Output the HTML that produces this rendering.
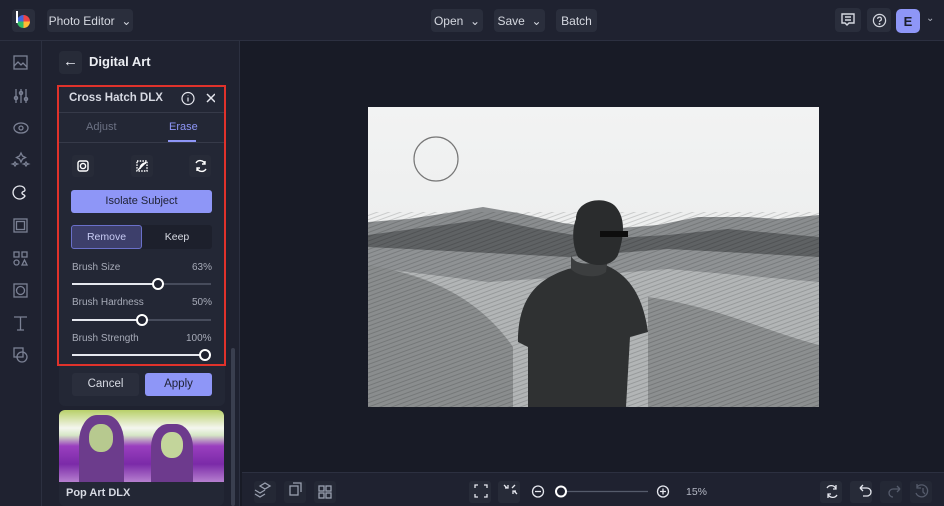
<!DOCTYPE html>
<html><head><style>
*{box-sizing:border-box;margin:0;padding:0}
body{width:944px;height:506px;overflow:hidden;background:#181b26;font-family:"Liberation Sans",sans-serif;color:#d7dae3;position:relative}
.abs{position:absolute}
.top{left:0;top:0;width:944px;height:41px;background:#1f2230;border-bottom:1px solid #2c3040}
.btn{position:absolute;background:#2a2e3c;border-radius:4px;font-size:12px;color:#d5d8e0;display:flex;align-items:center;justify-content:center}
.rail{left:0;top:41px;width:42px;height:465px;background:#1f2230;border-right:1px solid #2c3040}
.panel{left:42px;top:41px;width:198px;height:465px;background:#1f2230;border-right:1px solid #2c3040}
.bot{left:242px;top:472px;width:702px;height:34px;background:#1f2230;border-top:1px solid #2c3040}
.sq{position:absolute;width:22px;height:22px;background:#272b38;border-radius:3px}
.lbl{position:absolute;font-size:10px;color:#a7abb8}
.track{position:absolute;height:2px;background:#474c5c}
.fill{position:absolute;height:2px;background:#e5e7ee}
.knob{position:absolute;width:12px;height:12px;border-radius:50%;background:#1f2230;border:2px solid #fff}
</style></head><body>
<div class="abs top"></div>
<div class="abs" style="left:12px;top:9px;width:23px;height:23px;background:#2a2e3c;border-radius:4px"></div>
<div class="abs" style="left:17px;top:15px;width:13px;height:13px;border-radius:50%;background:conic-gradient(#e44 0 25%,#fb3 0 50%,#3b6 0 75%,#46d 0)"></div>
<div class="abs" style="left:16px;top:11px;width:2px;height:12px;background:#fff"></div>
<div class="btn" style="left:47px;top:9px;width:86px;height:23px">Photo Editor&nbsp;&nbsp;⌄</div>
<div class="btn" style="left:431px;top:9px;width:52px;height:23px">Open&nbsp;&nbsp;⌄</div>
<div class="btn" style="left:494px;top:9px;width:51px;height:23px">Save&nbsp;&nbsp;⌄</div>
<div class="btn" style="left:556px;top:9px;width:41px;height:23px">Batch</div>
<div class="btn" style="left:835px;top:8px;width:26px;height:24px">
<svg width="14" height="14" viewBox="0 0 14 14" fill="none" stroke="#d5d8e0" stroke-width="1.4"><path d="M1 1h12v9H8l-2 2-2-2H1z M4 4h6M4 7h6"/></svg></div>
<div class="btn" style="left:867px;top:8px;width:24px;height:24px"><svg width="15" height="15" viewBox="0 0 16 16" fill="none" stroke="#d5d8e0" stroke-width="1.3"><circle cx="8" cy="8" r="6.5"/><path d="M6 6.3a2 2 0 1 1 2.5 2c-.5.2-.5.6-.5 1.2"/><circle cx="8" cy="11.6" r=".4" fill="#d5d8e0"/></svg></div>
<div class="btn" style="left:896px;top:9px;width:24px;height:24px;background:#8e96f7;color:#1b1e2b;font-weight:bold;font-size:13px;border-radius:5px">E</div>
<div class="abs" style="left:926px;top:13px;font-size:10px;color:#b0b4c0">⌄</div>

<div class="abs rail"></div>
<svg class="abs" style="left:0;top:41px" width="42" height="330" fill="none" stroke="#7b8194" stroke-width="1.3">
<rect x="14" y="15" width="13" height="13"/><path d="M14 25l4-4 3 3 2-2 4 4"/>
<path d="M16 48v14M21 48v14M26 48v14" /><circle cx="16" cy="57" r="1.6"/><circle cx="21" cy="52" r="1.6"/><circle cx="26" cy="58" r="1.6"/>
<ellipse cx="21" cy="87" rx="7" ry="5"/><circle cx="21" cy="87" r="2"/>
<path d="M21 112l1.5 3 3 1.5-3 1.5-1.5 3-1.5-3-3-1.5 3-1.5z M15 121l1 1.5 1.5.5-1.5.5-1 1.5-1-1.5-1.5-.5 1.5-.5z M26 121l1 1.5 1.5.5-1.5.5-1 1.5-1-1.5-1.5-.5 1.5-.5z"/>
<path stroke="#e7e9ef" d="M20 145a6.5 6.5 0 1 0 5 10c-1-2-3-1-3-3s3-1 3-3c0-2-2-4-5-4z"/>
<rect x="14" y="178" width="13" height="13"/><rect x="16.5" y="180.5" width="8" height="8"/>
<rect x="14" y="211" width="5" height="5"/><rect x="22" y="211" width="5" height="5"/><circle cx="16.5" cy="221.5" r="2.5"/><path d="M22 224l2.5-5 2.5 5z"/>
<rect x="14" y="243" width="13" height="13"/><circle cx="20.5" cy="249.5" r="4"/>
<path d="M14 276h13M20.5 276v13M17 289h7"/>
<rect x="14" y="307" width="9" height="9"/><circle cx="22" cy="316" r="5"/>
</svg>

<div class="abs panel"></div>
<div class="abs" style="left:59px;top:51px;width:23px;height:23px;background:#272b38;border-radius:4px;color:#e5e7ee;font-size:15px;text-align:center;line-height:22px">←</div>
<div class="abs" style="left:89px;top:54px;font-size:13px;font-weight:bold;color:#eceef3">Digital Art</div>
<div class="abs" style="left:231px;top:348px;width:4px;height:158px;background:#3a3f4f;border-radius:2px"></div>

<div class="abs" style="left:59px;top:86px;width:166px;height:320px;background:#232735;border-radius:6px"></div>
<div class="abs" style="left:57px;top:85px;width:169px;height:281px;border:2px solid #e0322b"></div>
<div class="abs" style="left:59px;top:87px;width:165px;height:26px;border-bottom:1px solid #363a49"></div>
<div class="abs" style="left:69px;top:92px;font-size:11.5px;font-weight:bold;color:#d7dae3">Cross Hatch DLX</div>
<svg class="abs" style="left:181px;top:91px" width="34" height="15" fill="none" stroke="#e5e7ee" stroke-width="1.2"><circle cx="7" cy="7.5" r="6"/><path d="M7 6.5v4M7 4.3v.3"/><path d="M26 3l8 8M34 3l-8 8" stroke-width="1.5"/></svg>
<div class="abs" style="left:86px;top:121px;font-size:11px;color:#6c7284">Adjust</div>
<div class="abs" style="left:169px;top:121px;font-size:11px;color:#8e96f7">Erase</div>
<div class="abs" style="left:168px;top:140px;width:28px;height:2px;background:#8e96f7"></div>
<div class="abs" style="left:59px;top:142px;width:165px;height:1px;background:#363a49"></div>
<div class="sq" style="left:72px;top:155px"></div>
<div class="sq" style="left:131px;top:155px"></div>
<div class="sq" style="left:189px;top:155px"></div>
<svg class="abs" style="left:72px;top:155px" width="140" height="22" fill="none" stroke="#fff" stroke-width="1.4">
<rect x="6" y="6" width="10" height="10" rx="2"/><circle cx="11" cy="11" r="2.6"/>
<rect x="65" y="6" width="10" height="10" stroke-dasharray="1.5 1.2"/><path d="M66 15l8-8" /><path d="M68 14c0-4 3-6 6-6" fill="#fff"/>
<path d="M124 8a5 5 0 0 1 9 1M134 14a5 5 0 0 1-9-1M133 6v3h-3M125 16v-3h3"/>
</svg>
<div class="abs" style="left:71px;top:190px;width:141px;height:23px;background:#8e96f7;border-radius:3px;color:#1e2133;font-size:11px;text-align:center;line-height:23px">Isolate Subject</div>
<div class="abs" style="left:71px;top:225px;width:141px;height:24px;background:#1d202c;border-radius:3px"></div>
<div class="abs" style="left:71px;top:225px;width:71px;height:24px;background:#3d3f6b;border:1px solid #6a70c9;border-radius:3px;color:#c8cbf4;font-size:10.5px;text-align:center;line-height:22px">Remove</div>
<div class="abs" style="left:142px;top:225px;width:70px;height:24px;color:#d7dae3;font-size:10.5px;text-align:center;line-height:24px">Keep</div>

<div class="lbl" style="left:72px;top:262px">Brush Size</div><div class="lbl" style="left:192px;top:262px">63%</div>
<div class="track" style="left:72px;top:283px;width:139px"></div><div class="fill" style="left:72px;top:283px;width:86px"></div><div class="knob" style="left:152px;top:278px"></div>
<div class="lbl" style="left:72px;top:297px">Brush Hardness</div><div class="lbl" style="left:192px;top:297px">50%</div>
<div class="track" style="left:72px;top:319px;width:139px"></div><div class="fill" style="left:72px;top:319px;width:70px"></div><div class="knob" style="left:136px;top:314px"></div>
<div class="lbl" style="left:72px;top:333px">Brush Strength</div><div class="lbl" style="left:186px;top:333px">100%</div>
<div class="fill" style="left:72px;top:354px;width:134px"></div><div class="knob" style="left:199px;top:349px"></div>

<div class="abs" style="left:72px;top:373px;width:67px;height:23px;background:#2a2e3c;border-radius:3px;font-size:11.5px;text-align:center;line-height:23px;color:#d7dae3">Cancel</div>
<div class="abs" style="left:145px;top:373px;width:67px;height:23px;background:#8e96f7;border-radius:3px;font-size:11.5px;text-align:center;line-height:23px;color:#1e2133">Apply</div>

<div class="abs" style="left:59px;top:410px;width:165px;height:96px;background:#232735;border-radius:6px;overflow:hidden">
<div style="height:72px;background:linear-gradient(180deg,#b8d069 0,#f4f6ef 25%,#d6e7c6 35%,#9a3fbf 50%,#7b2aa8 75%,#b67fcf 100%);position:relative">
<div style="position:absolute;left:20px;top:5px;width:45px;height:67px;background:#6c3c8c;border-radius:40% 40% 0 0"></div>
<div style="position:absolute;left:30px;top:14px;width:24px;height:28px;background:#b7c98f;border-radius:45%"></div>
<div style="position:absolute;left:92px;top:14px;width:42px;height:58px;background:#6d3a8d;border-radius:40% 40% 0 0"></div>
<div style="position:absolute;left:102px;top:22px;width:22px;height:26px;background:#c3d59b;border-radius:45%"></div>
</div>
<div style="font-size:11px;font-weight:bold;color:#d7dae3;padding:5px 7px">Pop Art DLX</div>
</div>

<svg class="abs" style="left:368px;top:107px" width="451" height="300" viewBox="0 0 451 300">
<defs><linearGradient id="sky" x1="0" y1="0" x2="0" y2="1"><stop offset="0" stop-color="#f2f3f3"/><stop offset="1" stop-color="#e6e8e8"/></linearGradient>
<pattern id="hatch" width="4" height="4" patternUnits="userSpaceOnUse" patternTransform="rotate(-20)"><path d="M0 2h4" stroke="#000" stroke-opacity=".25" stroke-width="1"/></pattern></defs>
<rect width="451" height="300" fill="url(#sky)"/>
<path d="M0 115 L40 112 L80 106 L115 100 L150 106 L195 116 L240 122 L290 118 L330 110 L380 110 L410 112 L451 108 V300 H0Z" fill="#8a8d8f"/>
<path d="M0 128 L60 120 L120 112 L170 122 L230 132 L300 128 L360 122 L451 130 V300 H0Z" fill="#5f6264"/>
<path d="M0 140 L100 145 L200 150 L300 142 L451 150 V300 H0Z" fill="#8f9294"/>
<path d="M0 160 L120 175 L200 170 L300 162 L451 175 V300 H0Z" fill="#b2b5b6"/>
<path d="M0 158 C60 168 110 190 145 240 L145 300 H0Z" fill="#8a8d8e"/>
<path d="M280 190 C350 200 400 225 451 238 V300 H280Z" fill="#8c8f90"/>
<rect width="451" height="300" y="105" fill="url(#hatch)" opacity=".6"/>
<path d="M150 235 C150 190 170 172 200 162 L232 156 C262 166 275 190 280 225 L262 230 L258 300 L160 300 L160 240Z" fill="#2f3132"/>
<path d="M203 148 C205 158 225 160 240 150 L238 165 C230 172 210 170 203 162Z" fill="#3c3e3f"/>
<path d="M208 112 C208 92 238 88 248 100 C258 112 256 130 250 148 C244 160 225 162 210 150 C204 138 204 122 208 112Z" fill="#2a2c2d"/>
<path d="M232 124 h28 v6 h-28z" fill="#0d0d0d"/>
<circle cx="68" cy="52" r="22" fill="none" stroke="#777" stroke-width="1.2"/>
</svg>

<div class="abs bot"></div>
<div class="sq" style="left:254px;top:481px;background:#242835"></div>
<div class="sq" style="left:284px;top:481px;background:#242835"></div>
<div class="sq" style="left:314px;top:481px;background:#242835"></div>
<div class="sq" style="left:469px;top:481px"></div>
<div class="sq" style="left:498px;top:481px"></div>
<div class="sq" style="left:820px;top:481px"></div>
<div class="sq" style="left:850px;top:481px"></div>
<div class="sq" style="left:880px;top:481px;background:#242835"></div>
<div class="sq" style="left:910px;top:481px;background:#242835"></div>
<svg class="abs" style="left:242px;top:472px" width="702" height="34" fill="none" stroke="#9aa0b0" stroke-width="1.3">
<path d="M23 14l5-3 5 3-5 3z M18 18l5 3 5-3 M18 22l5 3 5-3" transform="translate(-5 0)"/>
<rect x="48" y="14" width="8" height="9"/><path d="M51 11h8v9"/>
<rect x="77" y="14" width="5" height="5"/><rect x="84" y="14" width="5" height="5"/><rect x="77" y="21" width="5" height="5"/><rect x="84" y="21" width="5" height="5"/>
<path stroke="#e5e7ee" d="M233 16v-3h3M242 13h3v3M245 22v3h-3M236 25h-3v-3"/>
<path stroke="#e5e7ee" d="M262 13l3 3M266 13v3h-3M273 13l-3 3M275 22l-3-3M271 22v-3h3"/>
<circle cx="296" cy="19.5" r="5.5" stroke="#e5e7ee"/><path d="M293 19.5h6" stroke="#e5e7ee"/>
<path d="M324 19.5h82" stroke="#555b6b"/>
<circle cx="319" cy="19.5" r="5" stroke="#fff" stroke-width="2" fill="#1f2230"/>
<circle cx="421" cy="19.5" r="5.5" stroke="#e5e7ee"/><path d="M418 19.5h6M421 16.5v6" stroke="#e5e7ee"/>
<path stroke="#e5e7ee" d="M585 16a5 5 0 0 1 9 1M595 23a5 5 0 0 1-9-1M594 13v4h-3M586 26v-4h3"/>
<path stroke="#e5e7ee" d="M618 16h7a4 4 0 0 1 0 8h-4M618 16l3-3M618 16l3 3"/>
<path stroke="#555b6b" d="M658 17h-7a4 4 0 0 0 0 8M658 17l-3-3M658 17l-3 3"/>
<path stroke="#555b6b" d="M675 15a6 6 0 1 1-1 6M675 12v4h4M681 16v4l2 2"/>
</svg>
<div class="abs" style="left:686px;top:486px;font-size:10.5px;color:#b4b8c4">15%</div>
</body></html>
